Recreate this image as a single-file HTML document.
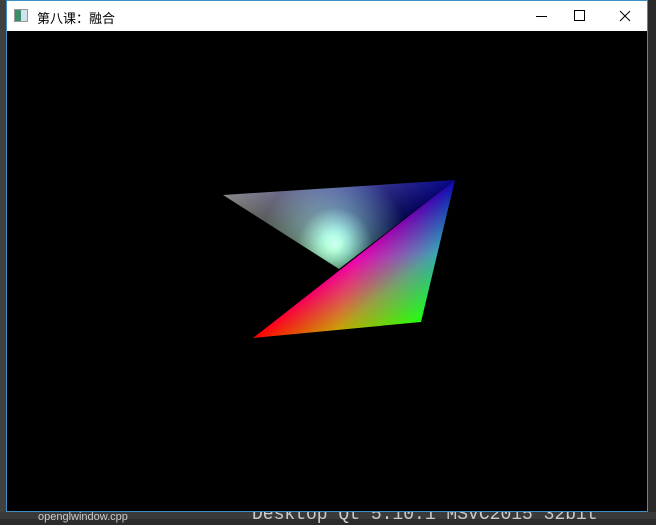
<!DOCTYPE html>
<html><head><meta charset="utf-8"><style>
html,body{margin:0;padding:0;width:656px;height:519px;overflow:hidden;background:#2b2b2b;font-family:"Liberation Sans","Noto Sans CJK SC",sans-serif;}
.win{position:absolute;left:6px;top:0;width:642px;height:512px;border:1px solid #3c8fc0;background:#000;box-sizing:border-box;}
.title{position:absolute;left:0;top:0;width:640px;height:30px;background:#fff;}
.title .t{position:absolute;left:30px;top:7px;font-size:13px;color:#000;}
.ico{position:absolute;left:7px;top:8px;width:12px;height:11px;border:1px solid #999;background:linear-gradient(90deg,#3a8f6a 0 50%,#cfe3ef 50%);}
.bot{position:absolute;top:512px;left:0;width:656px;height:7px;background:#3a3a3a;}
.bt{position:absolute;white-space:nowrap;}
</style></head><body>
<div style="position:absolute;left:0;top:0;width:6px;height:519px;background:#404040"></div>
<div style="position:absolute;left:649px;top:0;width:7px;height:519px;background:#2a2a2a"></div>
<div class="bot"></div>
<div class="bt" style="left:38px;top:511px;font-size:11px;color:#ccc">openglwindow.cpp</div>
<div class="bt" style="left:252px;top:505px;font-family:'Liberation Mono',monospace;font-size:18px;color:#ccc">Desktop Qt 5.10.1 MSVC2015 32bit</div>
<div class="win">
<div class="title"><div class="ico"></div><div class="t">第八课：融合</div>
<svg style="position:absolute;left:0;top:0" width="640" height="30">
<line x1="529" y1="15.5" x2="540" y2="15.5" stroke="#000" stroke-width="1"/>
<rect x="567.5" y="9.5" width="10" height="10" fill="none" stroke="#000"/>
<path d="M613 10 L623 20 M623 10 L613 20" stroke="#000" stroke-width="1"/>
</svg></div>
</div>
<svg style="position:absolute;left:0;top:0" width="656" height="519">
<defs>
<linearGradient id="p" gradientUnits="userSpaceOnUse" x1="223" y1="195" x2="301.7" y2="297.6"><stop offset="0" stop-color="#8a8a8a"/><stop offset="1" stop-color="#000"/></linearGradient>
<linearGradient id="q" gradientUnits="userSpaceOnUse" x1="455" y1="180" x2="381.1" y2="295.9"><stop offset="0" stop-color="#08088a"/><stop offset="1" stop-color="#000"/></linearGradient>
<radialGradient id="r" gradientUnits="userSpaceOnUse" cx="335" cy="245" r="75"><stop offset="0" stop-color="#b8ffc8"/><stop offset="0.2" stop-color="#80c8a0"/><stop offset="0.5" stop-color="#305040"/><stop offset="1" stop-color="#000"/></radialGradient>
<linearGradient id="a" gradientUnits="userSpaceOnUse" x1="253" y1="338" x2="408.3" y2="375.2"><stop offset="0" stop-color="#ff0000"/><stop offset="0.5" stop-color="#c00000"/><stop offset="1" stop-color="#000"/></linearGradient>
<linearGradient id="b" gradientUnits="userSpaceOnUse" x1="421" y1="322" x2="365" y2="250.4"><stop offset="0" stop-color="#22ff11"/><stop offset="0.5" stop-color="#0aa006"/><stop offset="1" stop-color="#000"/></linearGradient>
<linearGradient id="c" gradientUnits="userSpaceOnUse" x1="455" y1="180" x2="468.1" y2="317.5"><stop offset="0" stop-color="#0808b0"/><stop offset="0.5" stop-color="#3000b0"/><stop offset="1" stop-color="#000"/></linearGradient>
</defs>
<g style="isolation:isolate">
<polygon points="223,195 455,180 339,269" fill="#000"/>
<polygon points="223,195 455,180 339,269" fill="url(#p)" style="mix-blend-mode:plus-lighter"/>
<polygon points="223,195 455,180 339,269" fill="url(#q)" style="mix-blend-mode:plus-lighter"/>
<polygon points="223,195 455,180 339,269" fill="url(#r)" style="mix-blend-mode:plus-lighter"/>
</g>
<g style="isolation:isolate">
<polygon points="253,338 421,322 455,180" fill="#000"/>
<polygon points="253,338 421,322 455,180" fill="url(#a)" style="mix-blend-mode:plus-lighter"/>
<polygon points="253,338 421,322 455,180" fill="url(#b)" style="mix-blend-mode:plus-lighter"/>
<polygon points="253,338 421,322 455,180" fill="url(#c)" style="mix-blend-mode:plus-lighter"/>
</g>
</svg>
</body></html>
